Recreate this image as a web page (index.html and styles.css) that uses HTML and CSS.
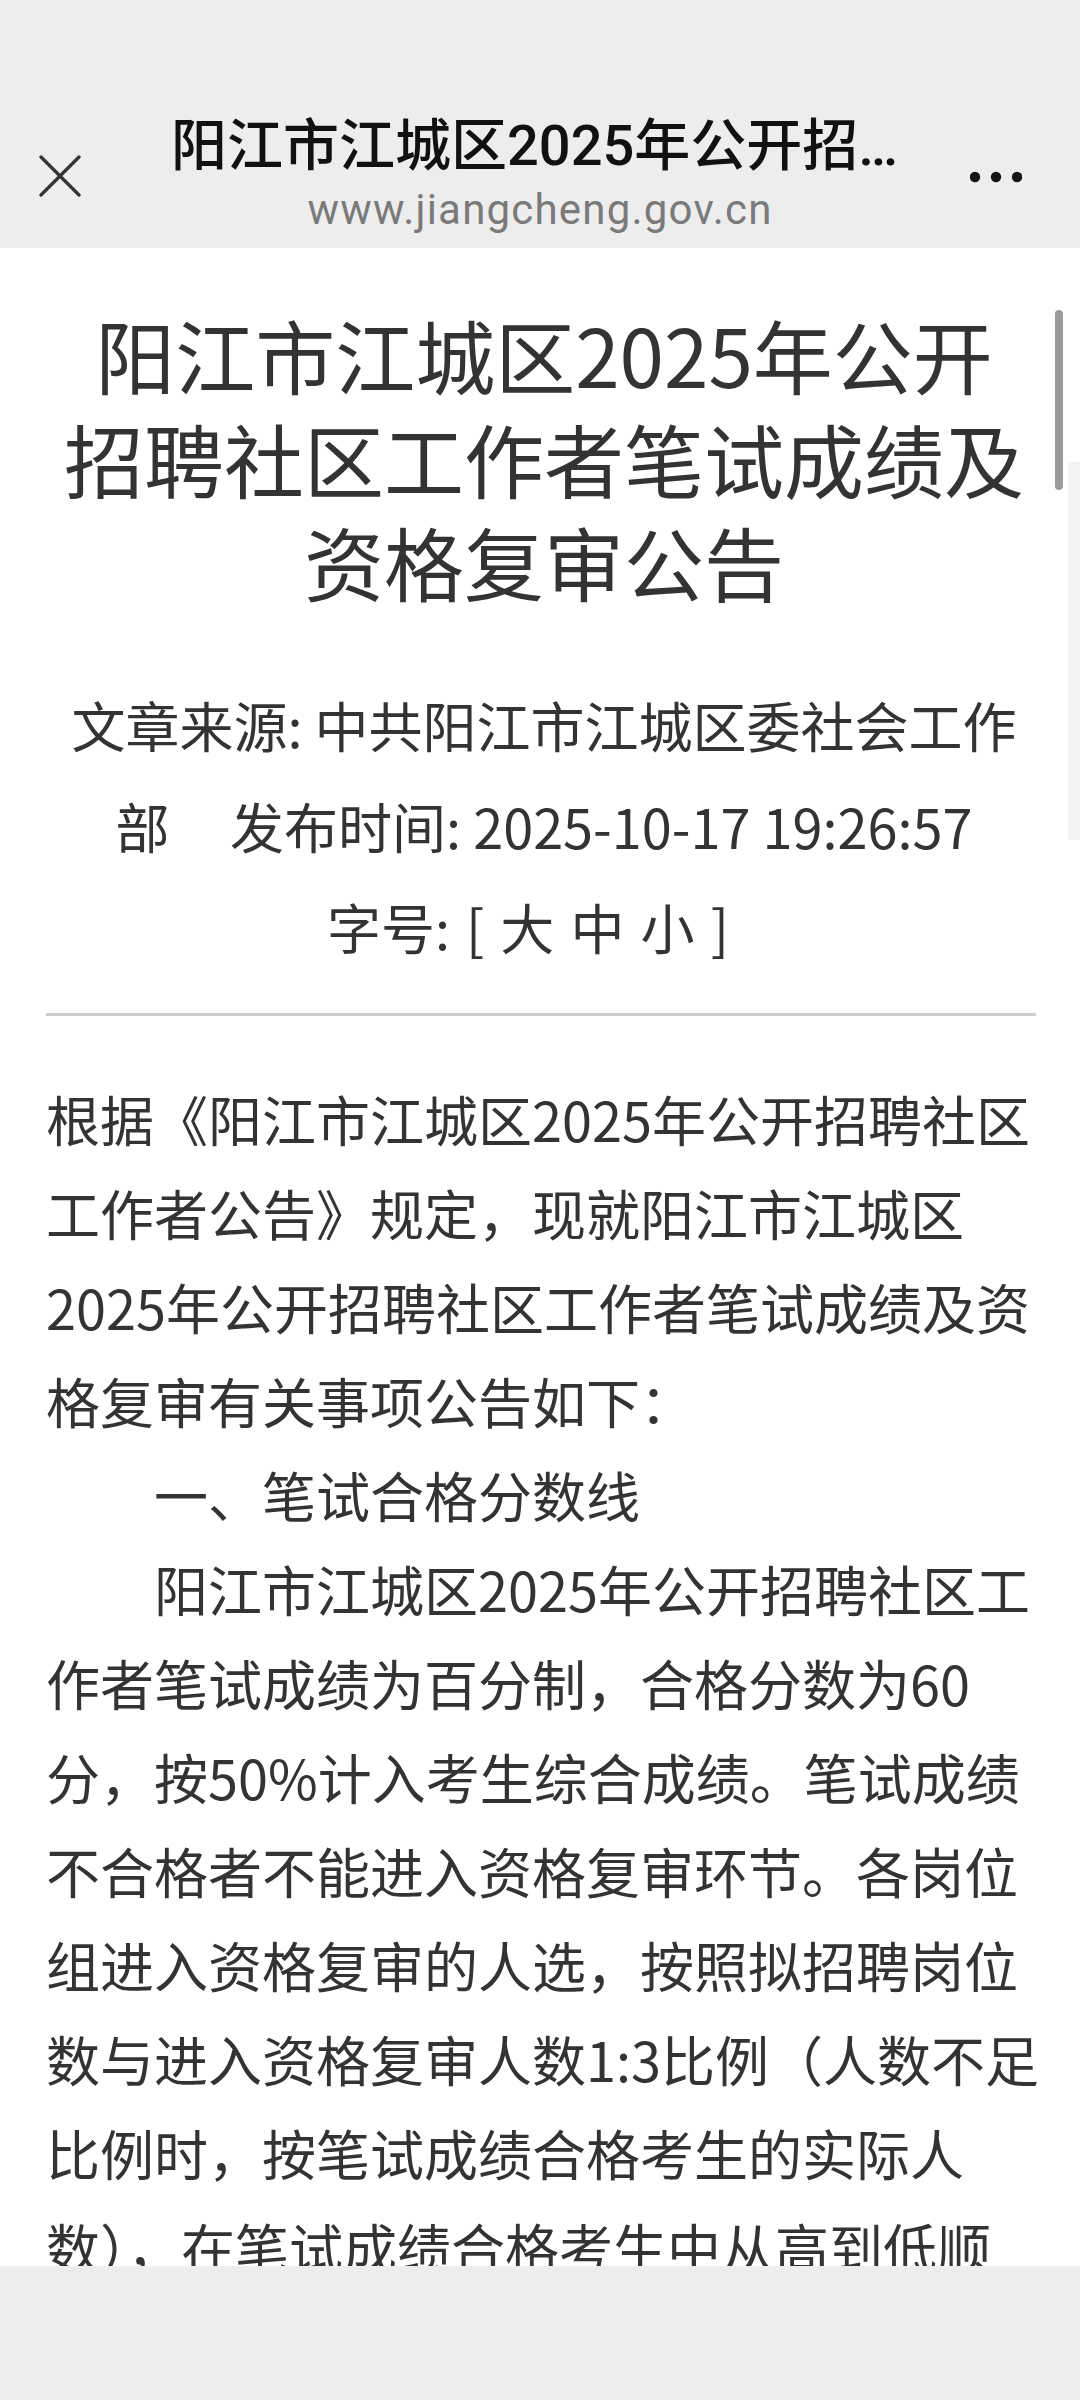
FILE: index.html
```html
<!DOCTYPE html>
<html lang="zh-CN">
<head>
<meta charset="utf-8">
<title>阳江市江城区2025年公开招聘社区工作者笔试成绩及资格复审公告</title>
<link rel="stylesheet" href="styles.css">
</head>
<body>
<header class="topbar">
  <svg class="close" viewBox="0 0 42 42" width="42" height="42" aria-hidden="true">
    <path d="M2 2 L40 40 M40 2 L2 40" stroke="#333" stroke-width="3.2" stroke-linecap="round" fill="none"/>
  </svg>
  <div class="titles">
    <div class="page-title">阳江市江城区2025年公开招聘社区工作者笔试成绩及资格复审公告</div>
    <div class="page-url">www.jiangcheng.gov.cn</div>
  </div>
  <svg class="more" viewBox="0 0 52 12" width="52" height="12" aria-hidden="true">
    <circle cx="5" cy="6" r="5.2" fill="#151515"/>
    <circle cx="26" cy="6" r="5.2" fill="#151515"/>
    <circle cx="47" cy="6" r="5.2" fill="#151515"/>
  </svg>
</header>

<main class="article">
  <h1 class="article-title">阳江市江城区2025年公开招聘社区工作者笔试成绩及资格复审公告</h1>
  <div class="meta">
    <span>文章来源: 中共阳江市江城区委社会工作部</span>&nbsp;&nbsp;&nbsp;&nbsp;&nbsp;<span>发布时间: 2025-10-17 19:26:57</span><br>
    <span class="fontsize">字号: [ 大 中 小 ]&nbsp;&nbsp;</span>
  </div>
  <hr class="divider">
  <div class="content">
    <p>根据《阳江市江城区2025年公开招聘社区工作者公告》规定，现就阳江市江城区2025年公开招聘社区工作者笔试成绩及资格复审有关事项公告如下：</p>
    <p class="indent">一、笔试合格分数线</p>
    <p class="indent">阳江市江城区2025年公开招聘社区工作者笔试成绩为百分制，合格分数为60分，按50%计入考生综合成绩。笔试成绩不合格者不能进入资格复审环节。各岗位组进入资格复审的人选，按照拟招聘岗位数与进入资格复审人数1:3比例（人数不足比例时，按笔试成绩合格考生的实际人数），在笔试成绩合格考生中从高到低顺序确定进入资格复审人选，最后一名笔试成绩并列的，一并进入资格复审。</p>
    <p class="indent">二、资格复审</p>
  </div>
</main>

<div class="scroll-thumb"></div>
<div class="scroll-track"></div>
<div class="bottombar"></div>
</body>
</html>
```

FILE: styles.css
```css
html, body {
  margin: 0;
  padding: 0;
  background: #ffffff;
}

body {
  font-family: "Noto Sans CJK SC", "Noto Sans", sans-serif;
  color: #333333;
}

.topbar {
  height: 248px;
  box-sizing: border-box;
  background: #ededed;
  display: flex;
  align-items: flex-start;
  padding-top: 110px;
}

.close {
  flex: none;
  margin: 45px 0 0 39px;
}

.titles {
  flex: none;
  width: 738px;
  margin-left: 90px;
  text-align: center;
}

.page-title {
  font-family: Roboto, "Noto Sans CJK SC", sans-serif;
  font-size: 56px;
  line-height: 72px;
  font-weight: 500;
  color: #111111;
  white-space: nowrap;
  overflow: hidden;
  text-overflow: ellipsis;
}

.page-url {
  font-family: Roboto, "Noto Sans", sans-serif;
  font-size: 42px;
  line-height: 56px;
  letter-spacing: 1.2px;
  color: #7a7a7a;
}

.more {
  flex: none;
  margin: 61px 0 0 61px;
}

.article {
  padding: 0 38px 0 46px;
}

.article-title {
  margin: 54px 0 0 0;
  padding: 0 14px;
  font-size: 80px;
  line-height: 103.5px;
  font-weight: 400;
  text-align: center;
  color: #333333;
}

.meta {
  margin-top: 61px;
  padding: 0 4px;
  font-size: 54px;
  line-height: 101px;
  text-align: center;
  color: #333333;
}

.meta .fontsize {
  word-spacing: 4px;
}

.divider {
  margin: 36px 6px 0 0;
  border: 0;
  height: 3px;
  background: #cccccc;
}

.content {
  margin-top: 56px;
  font-size: 54px;
  line-height: 94px;
  color: #333333;
}

.content p {
  margin: 0;
}

.content .indent {
  text-indent: 2em;
}

.scroll-thumb {
  position: fixed;
  left: 1055px;
  top: 310px;
  width: 8px;
  height: 180px;
  border-radius: 4px;
  background: #9a9a9a;
}

.scroll-track {
  position: fixed;
  left: 1068px;
  top: 462px;
  width: 12px;
  height: 378px;
  background: #f3f3f3;
}

.bottombar {
  position: fixed;
  left: 0;
  right: 0;
  bottom: 0;
  height: 134px;
  background: #ededed;
}
```
